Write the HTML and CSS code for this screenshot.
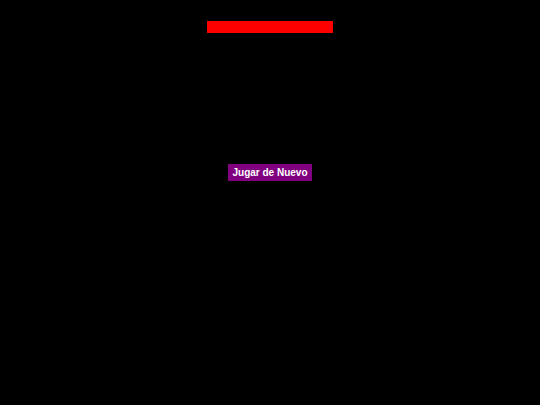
FILE: index.html
```html
<!DOCTYPE html>
<html lang="es">
<head>
<meta charset="utf-8">
<title>Juego</title>
<link rel="stylesheet" href="styles.css">
</head>
<body>
  <div class="hud">
    <div class="health-bar"><div class="health-fill"></div></div>
  </div>
  <div class="game-over">
    <button class="restart">Jugar de Nuevo</button>
  </div>
</body>
</html>
```

FILE: styles.css
```css
html, body {
  margin: 0;
  padding: 0;
  background: #000;
  width: 540px;
  height: 405px;
  overflow: hidden;
}

.hud {
  display: flex;
  justify-content: center;
  padding-top: 21px;
}

.health-bar {
  width: 126px;
  height: 12px;
}

.health-fill {
  width: 100%;
  height: 100%;
  background: #ff0000;
}

.game-over {
  display: flex;
  justify-content: center;
  padding-top: 131px;
}

.restart {
  font-family: "Liberation Sans", Arial, sans-serif;
  font-weight: bold;
  font-size: 10px;
  line-height: 11px;
  color: #fff;
  background: #800080;
  border: none;
  border-radius: 0;
  padding: 3px 4.5px;
  margin: 0;
  cursor: pointer;
}
```
